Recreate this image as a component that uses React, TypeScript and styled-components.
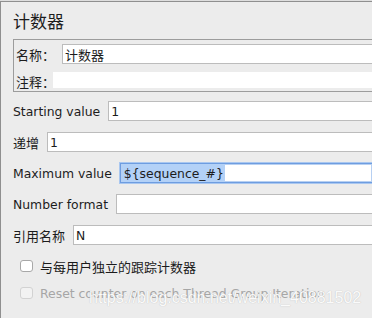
import React from "react";
import styled, { createGlobalStyle } from "styled-components";

const LATIN = `"DejaVu Sans", "Noto Sans CJK SC", sans-serif`;
const CJK = `"Noto Sans CJK SC", "DejaVu Sans", sans-serif`;

const Global = createGlobalStyle`
  html, body { margin: 0; padding: 0; background: #dedede; overflow: hidden; }
  body { width: 372px; height: 318px; }
`;

const Frame = styled.div`
  position: relative;
  box-sizing: border-box;
  width: 372px;
  height: 317px;
  margin-top: 1px;
  border-top: 1px solid #8f8f8f;
  border-left: 1px solid #8f8f8f;
  background: #ececec;
  padding: 9px 0 0 12px;
  font-family: ${LATIN};
  font-size: 12.4px;
  color: #1c1c1c;
  overflow: hidden;
`;

const Title = styled.div`
  font-family: ${CJK};
  font-size: 17px;
  line-height: 20px;
  height: 20px;
  margin-bottom: 8px;
`;

const NameBox = styled.div`
  border: 1px solid #9c9c9c;
  border-right: none;
  padding: 4px 0 0 2px;
  display: flex;
  flex-direction: column;
  gap: 8px;
  margin-bottom: 9px;
`;

const BoxRow = styled.div`
  display: flex;
  align-items: stretch;
`;

const Label = styled.span<{ $cjk?: boolean; $w?: number }>`
  flex: none;
  display: flex;
  align-items: center;
  white-space: nowrap;
  font-family: ${(p) => (p.$cjk ? CJK : LATIN)};
  font-size: ${(p) => (p.$cjk ? "13px" : "12.4px")};
  width: ${(p) => (p.$w ? `${p.$w}px` : "auto")};
`;

const Input = styled.div<{ $focused?: boolean; $cjk?: boolean }>`
  flex: 1;
  min-width: 0;
  box-sizing: border-box;
  height: 20px;
  display: flex;
  align-items: center;
  background: #fff;
  border: 1px solid ${(p) => (p.$focused ? "#6e9de0" : "#bcbcbc")};
  border-right: none;
  padding-left: ${(p) => (p.$focused ? "1px" : "2px")};
  white-space: nowrap;
  overflow: hidden;
  font-family: ${(p) => (p.$cjk ? CJK : LATIN)};
  font-size: ${(p) => (p.$cjk ? "13px" : "12.4px")};
  box-shadow: ${(p) =>
    p.$focused ? "0 0 0 1px #a9c7f0, inset 0 0 0 1px #b7d0f2" : "none"};
`;

const Comment = styled.div`
  flex: 1;
  height: 16px;
  background: #fff;
`;

const Selected = styled.span`
  display: flex;
  align-items: center;
  height: 100%;
  padding: 0 1px 0 2px;
  background: #b3d1f7;
`;

const Form = styled.div`
  display: flex;
  flex-direction: column;
  gap: 11px;
`;

const Row = styled.div`
  display: flex;
  align-items: center;
  gap: 8px;
`;

const Checks = styled.div`
  display: flex;
  flex-direction: column;
  gap: 9px;
  margin-top: 12px;
  padding-left: 7px;
`;

const CheckRow = styled.div<{ $disabled?: boolean }>`
  display: flex;
  align-items: center;
  gap: 7px;
  height: 18px;
  white-space: nowrap;
  color: ${(p) => (p.$disabled ? "#a6a6a6" : "#1c1c1c")};
  font-family: ${LATIN};
  font-size: 12.4px;
`;

const Box = styled.span<{ $disabled?: boolean }>`
  flex: none;
  box-sizing: border-box;
  width: 13px;
  height: 12px;
  border-radius: 3px;
  border: 1px solid ${(p) => (p.$disabled ? "#d2d2d2" : "#a8a8a8")};
  background: ${(p) => (p.$disabled ? "#f2f2f2" : "#fff")};
`;

const CjkText = styled.span`
  font-family: ${CJK};
  font-size: 13px;
`;

const Watermark = styled.div`
  position: absolute;
  left: 88px;
  top: 287px;
  font-family: "Liberation Sans", Arial, sans-serif;
  font-size: 16px;
  color: rgba(255, 255, 255, 0.95);
  text-shadow: 0 0 1px rgba(110, 110, 110, 0.45);
  white-space: nowrap;
  pointer-events: none;
`;

export default function App() {
  return (
    <>
      <Global />
      <Frame>
        <Title>计数器</Title>
        <NameBox>
          <BoxRow>
            <Label $cjk $w={46}>名称：</Label>
            <Input $cjk>计数器</Input>
          </BoxRow>
          <BoxRow>
            <Label $cjk $w={37}>注释：</Label>
            <Comment />
          </BoxRow>
        </NameBox>
        <Form>
          <Row>
            <Label>Starting value</Label>
            <Input>1</Input>
          </Row>
          <Row>
            <Label $cjk>递增</Label>
            <Input>1</Input>
          </Row>
          <Row>
            <Label>Maximum value</Label>
            <Input $focused>
              <Selected>{"${sequence_#}"}</Selected>
            </Input>
          </Row>
          <Row>
            <Label>Number format</Label>
            <Input />
          </Row>
          <Row>
            <Label $cjk>引用名称</Label>
            <Input>N</Input>
          </Row>
        </Form>
        <Checks>
          <CheckRow>
            <Box />
            <CjkText>与每用户独立的跟踪计数器</CjkText>
          </CheckRow>
          <CheckRow $disabled>
            <Box $disabled />
            <span>Reset counter on each Thread Group Iteration</span>
          </CheckRow>
        </Checks>
        <Watermark>https://blog.csdn.net/weixin_40881502</Watermark>
      </Frame>
    </>
  );
}
